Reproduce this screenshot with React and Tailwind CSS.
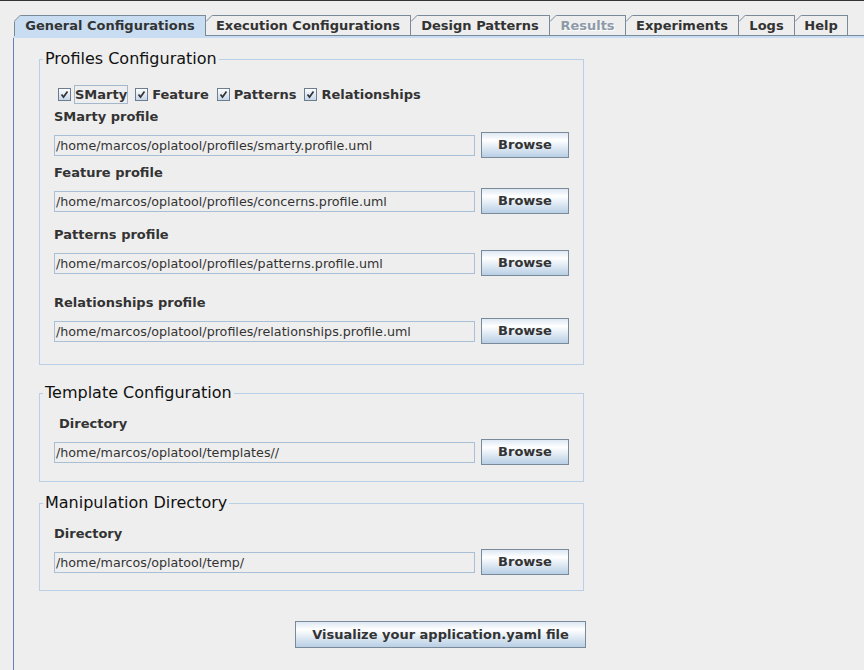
import React from "react";

const tabs = [
  { label: "General Configurations", width: "w-[192px]", selected: true },
  { label: "Execution Configurations", width: "w-[205px]" },
  { label: "Design Patterns", width: "w-[139px]" },
  { label: "Results", width: "w-[76px]", disabled: true },
  { label: "Experiments", width: "w-[113px]" },
  { label: "Logs", width: "w-[56px]" },
  { label: "Help", width: "w-[53px]" },
];

const btnBg =
  "bg-[linear-gradient(to_bottom,#dde8f3_0%,#ffffff_30%,#b8cfe5_100%)]";

function TabCorner({ selected }) {
  // the little slanted top-left corner of a Metal tab
  return (
    <svg
      className={`absolute top-[-1px] ${selected ? "left-[-1px]" : "left-0"}`}
      width="8"
      height="8"
      viewBox="0 0 8 8"
    >
      <polygon points="0,0 7,0 0,7" fill="#eeeeee" />
      <line x1="0" y1="6.5" x2="6.5" y2="0" stroke="#7a8a99" strokeWidth="1" />
    </svg>
  );
}

function Tab({ label, width, selected, disabled }) {
  return (
    <div
      className={`relative ${width} h-[21px] border-t border-r border-[#7a8a99] flex items-center justify-center text-[13px] font-bold ${
        selected ? "border-l bg-[#c8ddf2] text-[#333333]" : "border-b bg-[#eeeeee]"
      } ${disabled ? "text-[#8d9aa8] [text-shadow:1px_1px_0_#ffffff]" : "text-[#333333]"}`}
    >
      <TabCorner selected={selected} />
      <span className="leading-[16px]">{label}</span>
    </div>
  );
}

function CheckBox({ label, focused }) {
  return (
    <div className="flex items-center">
      <svg width="13" height="13" viewBox="0 0 13 13">
        <defs>
          <linearGradient id="cbg" x1="0" y1="0" x2="0" y2="1">
            <stop offset="0" stopColor="#ffffff" />
            <stop offset="1" stopColor="#c3d6ea" />
          </linearGradient>
        </defs>
        <rect x="0.5" y="0.5" width="12" height="12" fill="url(#cbg)" stroke="#6d7d8e" />
        <polyline points="3.5,6.5 5.5,9 9.5,3.5" fill="none" stroke="#333333" strokeWidth="1.7" />
      </svg>
      <span
        className={`ml-[3px] h-[19px] leading-[17px] border text-[13px] font-bold text-[#333333] ${
          focused ? "border-[#a3b8cc]" : "border-transparent"
        }`}
      >
        {label}
      </span>
    </div>
  );
}

function FieldLabel({ children, className = "" }) {
  return (
    <div className={`h-[16px] leading-[16px] text-[13px] font-bold text-[#333333] ${className}`}>
      {children}
    </div>
  );
}

function PathRow({ value, className = "" }) {
  return (
    <div className={`flex items-center h-[26px] gap-[6px] ${className}`}>
      <div className="w-[421px] h-[21px] border border-[#a9bfd6] px-[1px] text-[12.7px] leading-[19px] text-[#333333] whitespace-nowrap overflow-hidden">
        {value}
      </div>
      <button className={`w-[88px] h-[26px] border border-[#7a8a99] ${btnBg} text-[13px] font-bold text-[#333333]`}>
        Browse
      </button>
    </div>
  );
}

function Group({ title, className = "", children }) {
  return (
    <fieldset className={`w-[545px] border border-[#b8cfe5] ${className}`}>
      <legend className="ml-[3px] px-[2px] h-[16px] leading-[16px] text-[16px] text-[#111111]">
        {title}
      </legend>
      <div className="px-[14px]">{children}</div>
    </fieldset>
  );
}

export default function App() {
  return (
    <div className="w-[864px] h-[670px] bg-[#eeeeee] border-t border-[#333333] flex flex-col overflow-hidden font-['DejaVu_Sans',sans-serif]">
      <div className="mt-[14px] flex items-end pl-[14px]">
        {tabs.map((t) => (
          <Tab key={t.label} {...t} />
        ))}
        <div className="flex-1 h-[21px] border-b border-[#7a8a99]" />
      </div>
      <div className="ml-[13px] h-[2px] bg-[#c8ddf2]" />
      <div className="flex-1 ml-[13px] border-l border-[#6382bf] pl-[25px] flex flex-col">
        <Group title="Profiles Configuration" className="mt-[13px] pb-[20px]">
          <div className="mt-[18px] ml-[4px] flex items-center gap-[7px]">
            <CheckBox label="SMarty" focused />
            <CheckBox label="Feature" />
            <CheckBox label="Patterns" />
            <CheckBox label="Relationships" />
          </div>
          <FieldLabel className="mt-[5px]">SMarty profile</FieldLabel>
          <PathRow className="mt-[7px]" value="/home/marcos/oplatool/profiles/smarty.profile.uml" />
          <FieldLabel className="mt-[7px]">Feature profile</FieldLabel>
          <PathRow className="mt-[7px]" value="/home/marcos/oplatool/profiles/concerns.profile.uml" />
          <FieldLabel className="mt-[13px]">Patterns profile</FieldLabel>
          <PathRow className="mt-[7px]" value="/home/marcos/oplatool/profiles/patterns.profile.uml" />
          <FieldLabel className="mt-[19px]">Relationships profile</FieldLabel>
          <PathRow className="mt-[7px]" value="/home/marcos/oplatool/profiles/relationships.profile.uml" />
        </Group>

        <Group title="Template Configuration" className="mt-[20px] pb-[16px]">
          <FieldLabel className="mt-[15px] ml-[5px]">Directory</FieldLabel>
          <PathRow className="mt-[7px]" value="/home/marcos/oplatool/templates//" />
        </Group>

        <Group title="Manipulation Directory" className="mt-[13px] pb-[15px]">
          <FieldLabel className="mt-[15px]">Directory</FieldLabel>
          <PathRow className="mt-[7px]" value="/home/marcos/oplatool/temp/" />
        </Group>

        <button
          className={`mt-[30px] ml-[256px] w-[291px] h-[27px] border border-[#7a8a99] ${btnBg} text-[13px] font-bold text-[#333333]`}
        >
          Visualize your application.yaml file
        </button>
      </div>
    </div>
  );
}
